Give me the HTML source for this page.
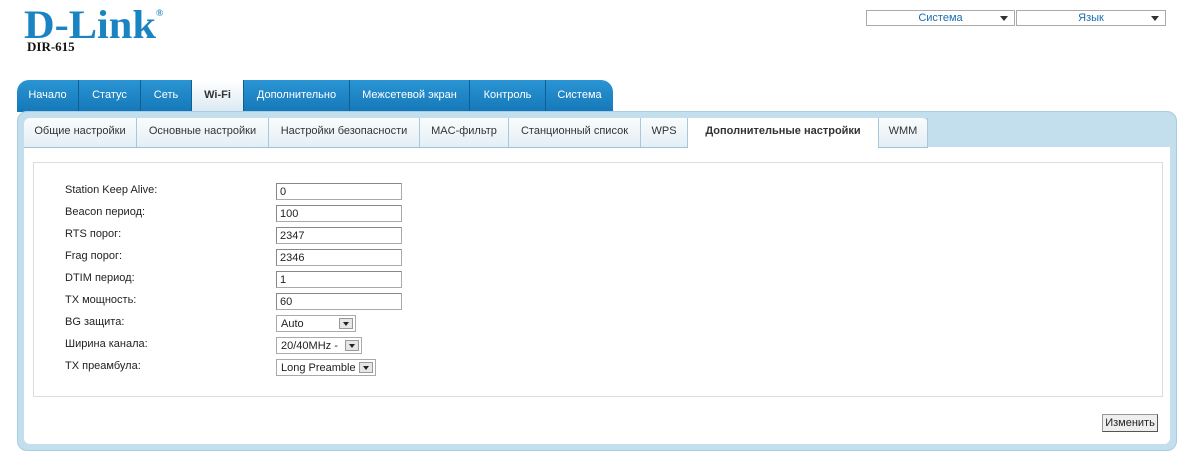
<!DOCTYPE html>
<html><head><meta charset="utf-8"><style>
*{box-sizing:border-box;margin:0;padding:0}
body{width:1193px;height:465px;background:#fff;font-family:"Liberation Sans",sans-serif;font-size:11px;color:#222;position:relative;overflow:hidden}
.abs{position:absolute}
.logo{left:24px;top:3px;font-family:"Liberation Serif",serif;font-weight:bold;font-size:40px;color:#1a84c3;letter-spacing:0;line-height:44px;transform:scaleX(1.06);transform-origin:left}
.model{left:27px;top:39px;font-family:"Liberation Serif",serif;font-weight:bold;font-size:13px;color:#111}
.sel{top:10px;height:16px;border:1px solid #aaa;color:#1a6fb0;text-align:center;line-height:14px;font-size:11px}
.sel i{position:absolute;right:6px;top:5px;border-left:4px solid transparent;border-right:4px solid transparent;border-top:5px solid #333}
.mtabs{left:17px;top:80px;width:596px;height:32px;background:linear-gradient(#2a95d4,#1577b8);border-radius:12px 12px 0 0;display:flex}
.mtabs div{color:#fff;font-size:11px;line-height:30px;text-align:center;border-right:1px solid #0d5f96}
.mtabs .on{background:linear-gradient(#fff,#dbe9f2);color:#333;font-weight:bold}
.panel{left:17px;top:111px;width:1160px;height:340px;background:#c3deed;border-radius:10px;border:1px solid #a9cde2}
.stabs{left:24px;top:118px;height:30px;display:flex;background:linear-gradient(#fafcfd,#e3eef5);border-radius:6px 6px 0 0;border-bottom:1px solid #9fc3da}
.stabs div{padding:0;text-align:center;line-height:26px;font-size:11px;color:#333;border-right:1px solid #a8c8dc}
.stabs .on{background:#fff;font-weight:bold;height:30px}
.content{left:24px;top:147px;width:1146px;height:297px;background:#fff;border-radius:0 0 6px 6px}
.box{left:33px;top:162px;width:1130px;height:235px;border:1px solid #ddd}
.lbl{left:65px;font-size:11px;color:#222;margin-top:1px}
.inp{left:276px;width:126px;height:17px;border:1px solid #aaa;border-top-color:#888;border-left-color:#888;font-size:11px;line-height:17px;padding-left:3px;background:#fff}
.dd{left:276px;height:17px;border:1px solid #aaa;font-size:11px;line-height:17px;padding-left:4px}
.dd b{position:absolute;right:2px;top:2px;width:14px;height:11px;background:#e6e6e6;border:1px solid #999}
.dd b:after{content:"";position:absolute;left:3px;top:3px;border-left:3px solid transparent;border-right:3px solid transparent;border-top:4px solid #222}
.btn{left:1102px;top:414px;width:56px;height:18px;background:#eee;border:1px solid #999;border-right-color:#555;border-bottom-color:#555;font-size:11px;text-align:center;line-height:16px}
</style></head><body>
<div class="abs logo">D-Link<span style="font-size:9px;vertical-align:top;line-height:20px">®</span></div>
<div class="abs model">DIR-615</div>
<div class="abs sel" style="left:866px;width:149px">Система<i></i></div>
<div class="abs sel" style="left:1016px;width:150px">Язык<i></i></div>
<div class="abs mtabs">
<div style="width:62px">Начало</div><div style="width:62px">Статус</div><div style="width:51px">Сеть</div><div class="on" style="width:52px">Wi-Fi</div><div style="width:106px">Дополнительно</div><div style="width:120px">Межсетевой экран</div><div style="width:76px">Контроль</div><div style="width:67px;border:0">Система</div>
</div>
<div class="abs panel"></div>
<div class="abs content"></div>
<div class="abs stabs">
<div style="width:113px">Общие настройки</div><div style="width:132px">Основные настройки</div><div style="width:151px">Настройки безопасности</div><div style="width:89px">MAC-фильтр</div><div style="width:132px">Станционный список</div><div style="width:47px">WPS</div><div class="on" style="width:191px">Дополнительные настройки</div><div style="width:49px">WMM</div>
</div>
<div class="abs box"></div>
<div class="abs lbl" style="top:183px">Station Keep Alive:</div><div class="abs inp" style="top:183px">0</div>
<div class="abs lbl" style="top:205px">Beacon период:</div><div class="abs inp" style="top:205px">100</div>
<div class="abs lbl" style="top:227px">RTS порог:</div><div class="abs inp" style="top:227px">2347</div>
<div class="abs lbl" style="top:249px">Frag порог:</div><div class="abs inp" style="top:249px">2346</div>
<div class="abs lbl" style="top:271px">DTIM период:</div><div class="abs inp" style="top:271px">1</div>
<div class="abs lbl" style="top:293px">TX мощность:</div><div class="abs inp" style="top:293px">60</div>
<div class="abs lbl" style="top:315px">BG защита:</div><div class="abs dd" style="top:315px;width:80px">Auto<b></b></div>
<div class="abs lbl" style="top:337px">Ширина канала:</div><div class="abs dd" style="top:337px;width:86px">20/40MHz -<b></b></div>
<div class="abs lbl" style="top:359px">TX преамбула:</div><div class="abs dd" style="top:359px;width:100px">Long Preamble<b></b></div>
<div class="abs btn">Изменить</div>
</body></html>
